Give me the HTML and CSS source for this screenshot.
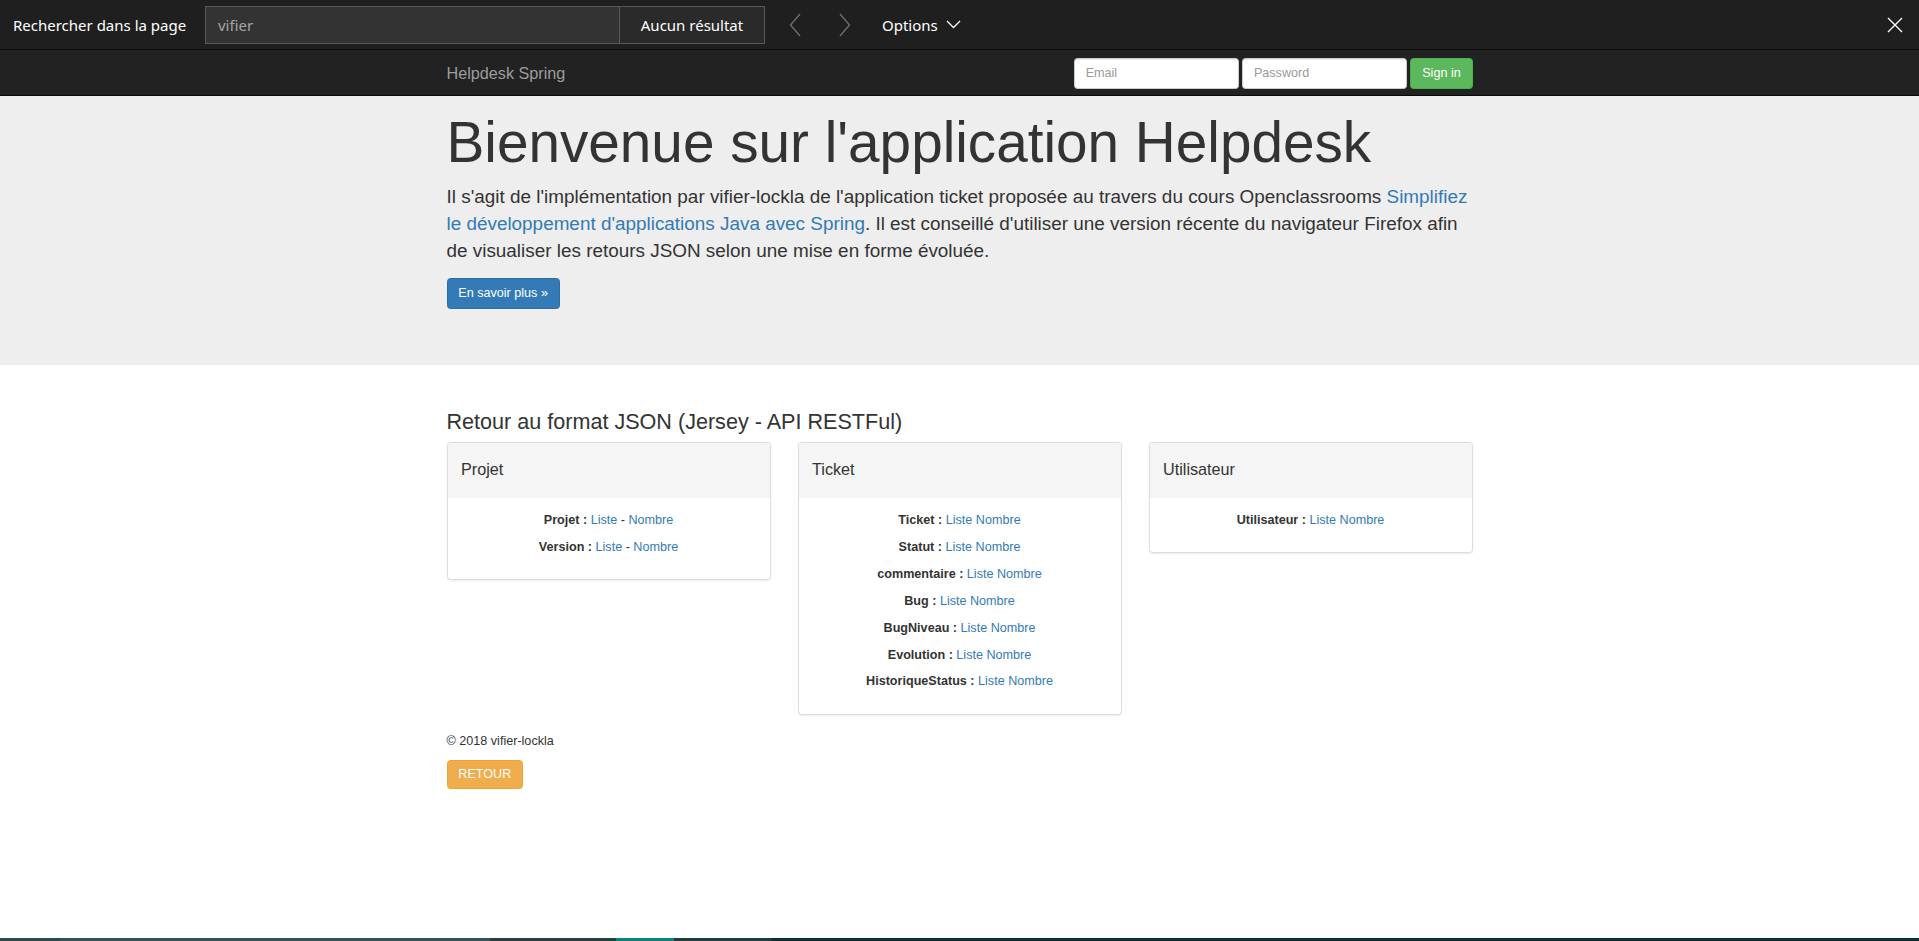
FILE: index.html
```html
<!DOCTYPE html>
<html lang="fr">
<head>
<meta charset="utf-8">
<title>Helpdesk Spring</title>
<link rel="stylesheet" href="styles.css">
</head>
<body>
<div class="findbar">
  <span class="find-label">Rechercher dans la page</span>
  <div class="find-box">
    <span class="find-query">vifier</span>
    <span class="find-count">Aucun résultat</span>
  </div>
  <button class="find-nav find-prev" aria-label="Précédent"><svg width="12" height="24" viewBox="0 0 12 24"><path d="M11 1 L1.5 12 L11 23" fill="none" stroke="#707070" stroke-width="1.3"/></svg></button>
  <button class="find-nav find-next" aria-label="Suivant"><svg width="12" height="24" viewBox="0 0 12 24"><path d="M1 1 L10.5 12 L1 23" fill="none" stroke="#707070" stroke-width="1.3"/></svg></button>
  <span class="find-options">Options <svg width="15" height="9" viewBox="0 0 15 9"><path d="M1 1 L7.5 7.5 L14 1" fill="none" stroke="#ffffff" stroke-width="1.3"/></svg></span>
  <button class="find-close" aria-label="Fermer"><svg width="16" height="16" viewBox="0 0 16 16"><path d="M1 1 L15 15 M15 1 L1 15" fill="none" stroke="#ffffff" stroke-width="1.4"/></svg></button>
</div>

<div class="page">
  <nav class="navbar">
    <div class="container navbar-inner">
      <a class="brand" href="#">Helpdesk Spring</a>
      <form class="signin">
        <input class="form-control" type="text" placeholder="Email">
        <input class="form-control" type="password" placeholder="Password">
        <button class="btn btn-success" type="button">Sign in</button>
      </form>
    </div>
  </nav>

  <div class="jumbotron">
    <div class="container">
      <h1>Bienvenue sur l'application Helpdesk</h1>
      <p class="intro">Il s'agit de l'implémentation par vifier-lockla de l'application ticket proposée au travers du cours Openclassrooms <a href="#">Simplifiez le développement d'applications Java avec Spring</a>. Il est conseillé d'utiliser une version récente du navigateur Firefox afin de visualiser les retours JSON selon une mise en forme évoluée.</p>
      <div class="jumbo-actions"><a class="btn btn-primary" href="#">En savoir plus »</a></div>
    </div>
  </div>

  <div class="container">
    <h3 class="section-title">Retour au format JSON (Jersey - API RESTFul)</h3>
    <div class="panels">
      <div class="panel">
        <div class="panel-heading"><h4 class="panel-title">Projet</h4></div>
        <div class="panel-body">
          <p><strong>Projet :</strong> <a href="#">Liste</a> - <a href="#">Nombre</a></p>
          <p><strong>Version :</strong> <a href="#">Liste</a> - <a href="#">Nombre</a></p>
        </div>
      </div>
      <div class="panel">
        <div class="panel-heading"><h4 class="panel-title">Ticket</h4></div>
        <div class="panel-body">
          <p><strong>Ticket :</strong> <a href="#">Liste</a> <a href="#">Nombre</a></p>
          <p><strong>Statut :</strong> <a href="#">Liste</a> <a href="#">Nombre</a></p>
          <p><strong>commentaire :</strong> <a href="#">Liste</a> <a href="#">Nombre</a></p>
          <p><strong>Bug :</strong> <a href="#">Liste</a> <a href="#">Nombre</a></p>
          <p><strong>BugNiveau :</strong> <a href="#">Liste</a> <a href="#">Nombre</a></p>
          <p><strong>Evolution :</strong> <a href="#">Liste</a> <a href="#">Nombre</a></p>
          <p><strong>HistoriqueStatus :</strong> <a href="#">Liste</a> <a href="#">Nombre</a></p>
        </div>
      </div>
      <div class="panel">
        <div class="panel-heading"><h4 class="panel-title">Utilisateur</h4></div>
        <div class="panel-body">
          <p><strong>Utilisateur :</strong> <a href="#">Liste</a> <a href="#">Nombre</a></p>
        </div>
      </div>
    </div>
    <footer class="site-footer">
      <p>© 2018 vifier-lockla</p>
      <a class="btn btn-warning" href="#">RETOUR</a>
    </footer>
  </div>
</div>

<div class="taskbar-edge">
  <span class="seg seg-a"></span>
  <span class="seg seg-b"></span>
  <span class="seg seg-c"></span>
  <span class="seg seg-d"></span>
  <span class="seg seg-e"></span>
  <span class="seg seg-f"></span>
</div>
</body>
</html>
```

FILE: styles.css
```css
* { box-sizing: border-box; }

html, body {
  margin: 0;
  height: 100%;
}

body {
  display: flex;
  flex-direction: column;
  background: #fff;
  color: #333;
  font-family: "Liberation Sans", Arial, sans-serif;
  overflow: hidden;
}

/* ---------- Browser find bar ---------- */
.findbar {
  flex: 0 0 50px;
  height: 50px;
  display: flex;
  align-items: center;
  background: #1f1f1f;
  border-bottom: 1px solid #0b0b0b;
  font-family: "Noto Sans", "Open Sans", sans-serif;
  font-size: 15px;
  color: #fff;
}

.find-label {
  flex: 0 0 205px;
  padding-left: 13px;
  white-space: nowrap;
}

.find-box {
  display: flex;
  width: 560px;
  height: 38px;
  border: 1px solid #595959;
}

.find-query {
  flex: 1;
  display: flex;
  align-items: center;
  padding-left: 12px;
  background: #333;
  color: #a6a6a6;
}

.find-count {
  width: 145px;
  display: flex;
  align-items: center;
  justify-content: center;
  border-left: 1px solid #595959;
  background: #2a2a2a;
}

.find-nav,
.find-close {
  width: 40px;
  height: 38px;
  padding: 0;
  border: 0;
  background: none;
  display: flex;
  align-items: center;
  justify-content: center;
}

.find-prev { margin-left: 10px; }
.find-next { margin-left: 10px; }

.find-options {
  margin-left: 17px;
  display: flex;
  align-items: center;
  gap: 8px;
}

.find-close {
  margin-left: auto;
  margin-right: 4px;
}

/* ---------- Page (rendered at 90%) ---------- */
.page {
  zoom: 0.9;
  flex: 1 0 auto;
  font-size: 14px;
  line-height: 1.42857;
}

a {
  color: #337ab7;
  text-decoration: none;
}

.container {
  display: flow-root;
  width: 1170px;
  margin: 0 auto;
  padding: 0 15px;
}

.navbar {
  height: 51px;
  background: #222;
  border-bottom: 1px solid #080808;
}

.navbar-inner {
  display: flex;
  justify-content: space-between;
  align-items: flex-start;
  height: 50px;
}

.brand {
  padding: 15px 0;
  font-size: 18px;
  line-height: 20px;
  color: #9d9d9d;
}

.signin {
  display: flex;
  gap: 4px;
  margin: 9px 0 0;
}

.form-control {
  width: 183px;
  height: 34px;
  padding: 6px 12px;
  font-family: inherit;
  font-size: 14px;
  color: #555;
  background: #fff;
  border: 1px solid #ccc;
  border-radius: 4px;
  box-shadow: inset 0 1px 1px rgba(0, 0, 0, .075);
}

.form-control::placeholder { color: #999; }

.btn {
  display: inline-block;
  padding: 6px 12px;
  font-family: inherit;
  font-size: 14px;
  line-height: 20px;
  color: #fff;
  border: 1px solid transparent;
  border-radius: 4px;
  white-space: nowrap;
}

.btn-success { background: #5cb85c; border-color: #4cae4c; }
.btn-primary { background: #337ab7; border-color: #2e6da4; }
.btn-warning { background: #f0ad4e; border-color: #eea236; padding: 5px 12px; }

/* ---------- Jumbotron ---------- */
.jumbotron {
  background: #eee;
  padding: 0 0 47px;
  margin-bottom: 30px;
}

.jumbotron h1 {
  margin: 18px 0 10px;
  font-size: 63px;
  font-weight: 500;
  line-height: 1.1;
}

.intro {
  margin: 0 0 15px;
  font-size: 21px;
  line-height: 30px;
}

.jumbo-actions {
  display: flex;
  margin-bottom: 15px;
}

/* ---------- Panels ---------- */
.section-title {
  margin: 20px 0 10px;
  font-size: 24px;
  font-weight: 500;
  line-height: 1.1;
}

.panels {
  display: grid;
  grid-template-columns: repeat(3, 1fr);
  column-gap: 30px;
  align-items: start;
}

.panel {
  margin-bottom: 20px;
  background: #fff;
  border: 1px solid #ddd;
  border-radius: 4px;
  box-shadow: 0 1px 2px rgba(0, 0, 0, .08);
  overflow: hidden;
}

.panel-heading {
  padding: 20px 15px;
  background: #f5f5f5;
  border-bottom: 1px solid #f5f5f5;
}

.panel-title {
  margin: 0;
  font-size: 18px;
  font-weight: 500;
  line-height: 1.1;
  color: #333;
}

.panel-body {
  padding: 15px;
  text-align: center;
}

.panel-body p {
  margin: 0 0 10px;
}

.site-footer p {
  margin: 0 0 10px;
}

/* ---------- Taskbar edge ---------- */
.taskbar-edge {
  flex: 0 0 3px;
  display: flex;
}

.seg { display: block; height: 3px; }
.seg-a { width: 60px; background: #2c4a48; }
.seg-b { width: 430px; background: #2f5558; }
.seg-c { width: 126px; background: #25413e; }
.seg-d { width: 58px; background: #0e8080; }
.seg-e { width: 97px; background: #1f3d3c; }
.seg-f { flex: 1; background: #0f2f30; }
```
